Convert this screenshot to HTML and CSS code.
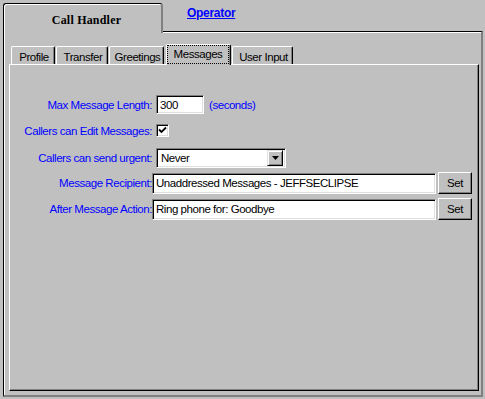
FILE: index.html
```html
<!DOCTYPE html>
<html>
<head>
<meta charset="utf-8">
<link rel="stylesheet" href="styles.css">
</head>
<body>
<div class="app">
  <div class="top-tabs">
    <div class="tab-main"><span>Call Handler</span></div>
    <a class="tab-link" href="#">Operator</a>
  </div>
  <div class="outer-panel">
    <div class="inner-tabs">
      <div class="itab w-profile">Profile</div>
      <div class="itab w-transfer">Transfer</div>
      <div class="itab w-greet">Greetings</div>
      <div class="itab active w-msg"><span class="focus">Messages</span></div>
      <div class="itab w-user">User Input</div>
    </div>
    <div class="inner-panel">
      <div class="form">
        <div class="row r1">
          <span class="lbl">Max Message Length:</span>
          <span class="field f-len">300</span>
          <span class="unit">(seconds)</span>
        </div>
        <div class="row r2">
          <span class="lbl">Callers can Edit Messages:</span>
          <span class="check"><svg width="9" height="9" viewBox="0 0 9 9"><path d="M1 3.5 L3.5 6 L8 1.5" fill="none" stroke="#000" stroke-width="1.8"/></svg></span>
        </div>
        <div class="row r3">
          <span class="lbl">Callers can send urgent:</span>
          <span class="select"><span class="sel-text">Never</span><span class="sel-btn"><svg width="7" height="4" viewBox="0 0 7 4"><path d="M0 0 H7 L3.5 4 Z" fill="#000"/></svg></span></span>
        </div>
        <div class="row r4">
          <span class="lbl">Message Recipient:</span>
          <span class="field f-wide">Unaddressed Messages - JEFFSECLIPSE</span>
          <span class="btn">Set</span>
        </div>
        <div class="row r5">
          <span class="lbl">After Message Action:</span>
          <span class="field f-wide">Ring phone for: Goodbye</span>
          <span class="btn">Set</span>
        </div>
      </div>
    </div>
  </div>
</div>
</body>
</html>
```

FILE: styles.css
```css
* { box-sizing: border-box; }
html, body { margin: 0; padding: 0; }
body {
  background: #c0c0c0;
  font-family: "Liberation Sans", Arial, sans-serif;
  font-size: 11.5px;
  letter-spacing: -0.45px;
  color: #000;
}
.app {
  width: 485px;
  height: 399px;
  padding: 3px 2px 2px 3px;
  display: flex;
  flex-direction: column;
  overflow: hidden;
}
.top-tabs {
  display: flex;
  align-items: flex-start;
  height: 28px;
  flex: none;
  position: relative;
  z-index: 2;
}
.tab-main {
  width: 160px;
  height: 30px;
  background: #c0c0c0;
  border-top: 1px solid #000;
  border-left: 1px solid #000;
  border-right: 2px solid #808080;
  border-radius: 3px 3px 0 0;
  box-shadow: inset 1px 1px 0 #fff;
  display: flex;
  justify-content: center;
  padding: 9px 0 0 8px;
  font: bold 12px "Liberation Serif", "Times New Roman", serif;
  letter-spacing: 0.2px;
  line-height: 14px;
}
.tab-link {
  margin-left: 24px;
  margin-top: 3px;
  font: bold 12px "Liberation Sans", Arial, sans-serif;
  letter-spacing: -0.3px;
  line-height: 14px;
  color: #0000ff;
  text-decoration: underline;
}
.outer-panel {
  flex: 1;
  display: flex;
  flex-direction: column;
  border-top: 1px solid #000;
  border-left: 1px solid #000;
  border-right: 2px solid #808080;
  border-bottom: 2px solid #808080;
  box-shadow: inset 1px 1px 0 #fff;
  padding: 12px 2px 4px 5px;
}
.inner-tabs {
  display: flex;
  align-items: flex-end;
  height: 20px;
  margin-left: 2px;
  position: relative;
  z-index: 1;
  flex: none;
}
.itab {
  height: 18px;
  margin-right: 1px;
  border-top: 1px solid #fff;
  border-left: 1px solid #fff;
  border-right: 1px solid #000;
  border-radius: 2px 2px 0 0;
  box-shadow: inset -1px 0 0 #808080;
  background: #c0c0c0;
  display: flex;
  justify-content: center;
  align-items: center;
  line-height: 14px;
  padding: 2px 0 0 2px;
}
.itab.active {
  height: 21px;
  margin-bottom: -1px;
  margin-left: 1px;
  align-items: stretch;
  padding: 1px 2px 2px 1px;
}
.focus {
  flex: 1;
  outline: 1px dotted #000;
  outline-offset: 0;
  text-align: center;
  padding-top: 1px;
  line-height: 14px;
}
.w-profile { width: 44px; }
.w-transfer { width: 52px; }
.w-greet { width: 55px; }
.w-msg { width: 65px; }
.w-user { width: 61px; }
.inner-panel {
  flex: 1;
  border-top: 1px solid #fff;
  border-left: 1px solid #fff;
  border-right: 1px solid #000;
  border-bottom: 1px solid #000;
  box-shadow: inset -1px -1px 0 #808080;
  padding-top: 30px;
}
.form { display: flex; flex-direction: column; }
.row { display: flex; align-items: center; }
.lbl {
  width: 142px;
  text-align: right;
  color: #0000ff;
  white-space: nowrap;
  line-height: 14px;
}
.r1 { height: 19px; }
.r2 { height: 15px; margin-top: 9px; }
.r3 { height: 20px; margin-top: 10px; }
.r4 { height: 22px; margin-top: 4px; }
.r5 { height: 22px; margin-top: 4px; }
.field {
  background: #fff;
  border: 1px solid;
  border-color: #808080 #fff #fff #808080;
  box-shadow: inset 1px 1px 0 #000, inset -1px -1px 0 #dfdfdf;
  padding: 0 2px 0 3px;
  display: flex;
  align-items: center;
  white-space: nowrap;
  line-height: 14px;
}
.f-len { width: 48px; height: 19px; margin-left: 4px; }
.f-wide { width: 284px; height: 21px; }
.unit { color: #0000ff; margin-left: 5px; line-height: 14px; }
.check {
  width: 13px;
  height: 13px;
  margin-left: 4px;
  background: #fff;
  border: 1px solid;
  border-color: #808080 #fff #fff #808080;
  box-shadow: inset 1px 1px 0 #000, inset -1px -1px 0 #dfdfdf;
  display: flex;
  align-items: center;
  justify-content: center;
}
.check svg { display: block; }
.select {
  width: 130px;
  height: 20px;
  margin-left: 4px;
  background: #fff;
  border: 1px solid;
  border-color: #808080 #fff #fff #808080;
  box-shadow: inset 1px 1px 0 #000, inset -1px -1px 0 #dfdfdf;
  display: flex;
  align-items: center;
  padding: 2px 2px 2px 4px;
}
.sel-text { flex: 1; line-height: 14px; }
.sel-btn {
  width: 16px;
  height: 16px;
  background: #c0c0c0;
  border: 1px solid;
  border-color: #dfdfdf #000 #000 #dfdfdf;
  box-shadow: inset 1px 1px 0 #fff, inset -1px -1px 0 #808080;
  display: flex;
  align-items: center;
  justify-content: center;
}
.sel-btn svg { display: block; }
.btn {
  width: 34px;
  height: 22px;
  margin-left: 2px;
  background: #c0c0c0;
  border: 1px solid;
  border-color: #fff #000 #000 #fff;
  box-shadow: inset -1px -1px 0 #808080;
  display: flex;
  align-items: center;
  justify-content: center;
  line-height: 14px;
}
```
